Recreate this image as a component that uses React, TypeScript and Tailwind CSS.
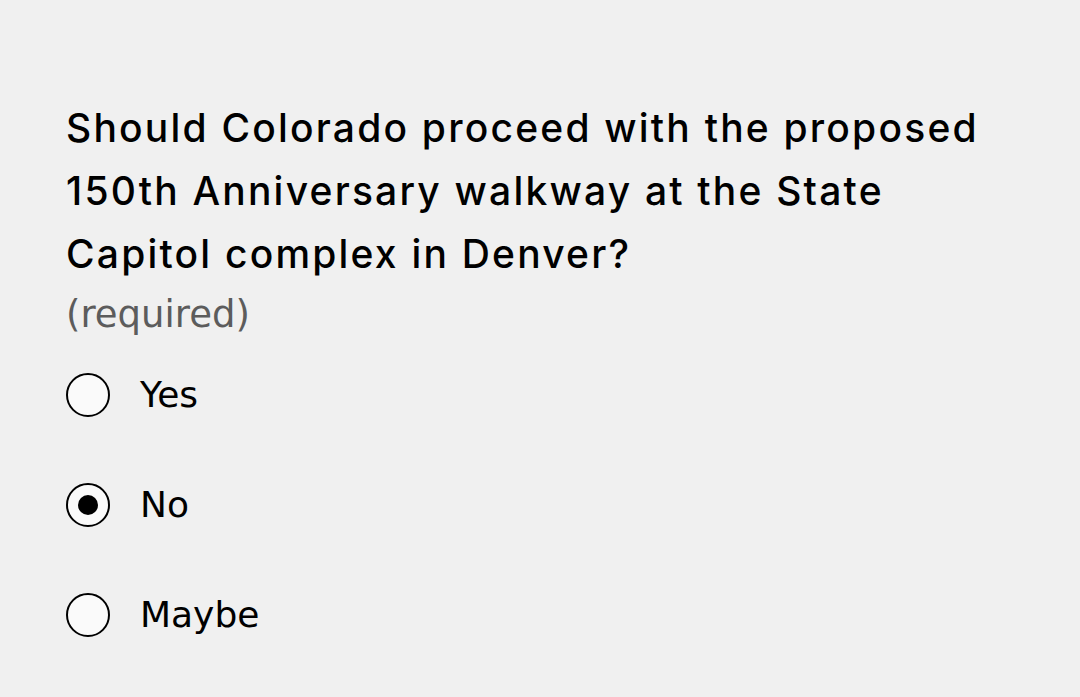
import { useState } from "react";

const options = ["Yes", "No", "Maybe"];

function RadioOption({ label, checked, onSelect }: { label: string; checked: boolean; onSelect: () => void }) {
    return (
        <label className="flex items-center h-[110px] cursor-pointer" onClick={onSelect}>
            <span className="flex items-center justify-center w-[44px] h-[44px] rounded-full border-2 border-black bg-[#fafafa] shrink-0">
                {checked && <span className="w-[20px] h-[20px] rounded-full bg-black" />}
            </span>
            <span className="ml-[30px] text-[36px] text-black font-['DejaVu_Sans',sans-serif]">{label}</span>
        </label>
    );
}

export default function App() {
    const [value, setValue] = useState("No");
    return (
        <div className="min-h-screen bg-[#f0f0f0] px-[66px] pt-[96px]">
            <h2 className="text-[39px] leading-[63px] font-medium text-black font-['Inter',sans-serif] tracking-[2.2px] max-w-[950px]">
                Should Colorado proceed with the proposed 150th Anniversary walkway at the State Capitol complex in Denver?
            </h2>
            <p className="text-[37px] leading-[60px] text-[#5c5c5c] font-['DejaVu_Sans',sans-serif]">(required)</p>
            <div className="flex flex-col -mt-[5px]">
                {options.map((opt) => (
                    <RadioOption key={opt} label={opt} checked={value === opt} onSelect={() => setValue(opt)} />
                ))}
            </div>
        </div>
    );
}
